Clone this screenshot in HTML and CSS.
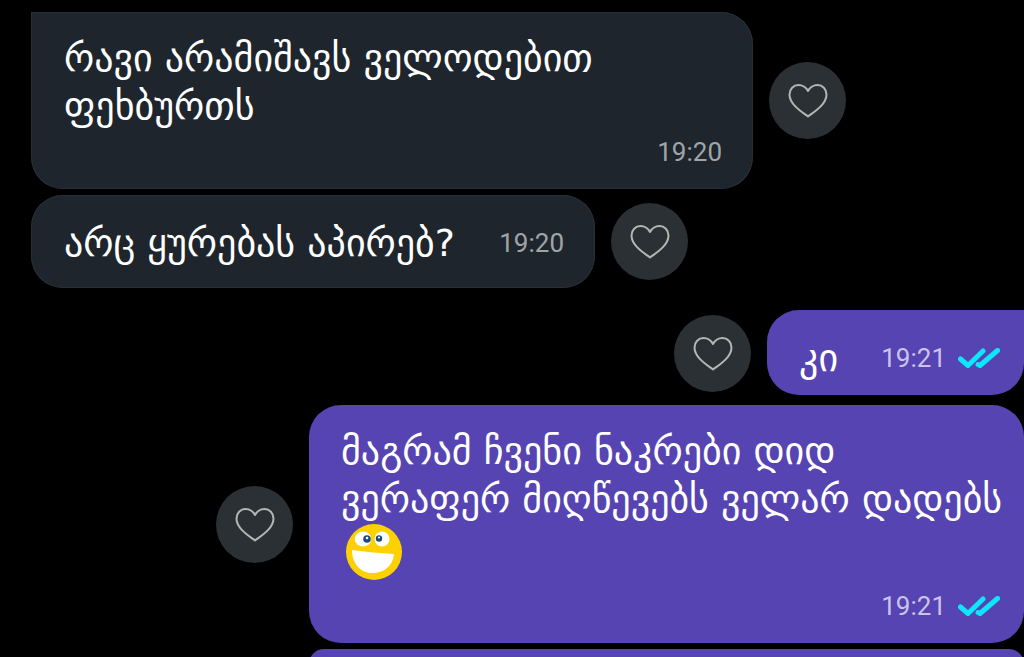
FILE: index.html
```html
<!DOCTYPE html>
<html lang="ka">
<head>
    <meta charset="UTF-8">
    <meta name="viewport" content="width=device-width, initial-scale=1.0">
    <title>Chat</title>
    <link rel="stylesheet" href="styles.css">
</head>
<body>

    <svg class="hidden">
        <symbol id="heart" viewBox="0 0 40 36">
            <path d="M20 33.5C14 29 1.5 21.5 1.5 11.5C1.5 6 5.5 2 10.500 2C14.500 2 18 4.500 20 8C22 4.500 25.500 2 29.500 2C34.500 2 38.500 6 38.500 11.500C38.500 21.500 26 29 20 33.500Z" fill="none" stroke="#b4b6b4" stroke-width="2" stroke-linejoin="round"/>
        </symbol>
        <symbol id="ticks" viewBox="0 0 42 20">
            <path d="M2.500 11L10 17.500L25 3M20 16.500L22 17.500L39.500 2.500" fill="none" stroke="#0fe6fb" stroke-width="5" stroke-linecap="round" stroke-linejoin="round"/>
        </symbol>
    </svg>

    <div class="row row-first">
        <div class="bubble received corner-top-left">
            <p class="text">რავი არამიშავს ველოდებით<br>ფეხბურთს</p>
            <div class="meta"><span class="time">19:20</span></div>
        </div>
        <div class="like"><svg class="heart"><use href="#heart"/></svg></div>
    </div>

    <div class="row row-second">
        <div class="bubble received inline">
            <p class="text">არც ყურებას აპირებ?</p>
            <div class="meta"><span class="time">19:20</span></div>
        </div>
        <div class="like"><svg class="heart"><use href="#heart"/></svg></div>
    </div>

    <div class="row sent-row row-third">
        <div class="like"><svg class="heart"><use href="#heart"/></svg></div>
        <div class="bubble sent inline corner-top-right">
            <p class="text">კი</p>
            <div class="meta"><span class="time">19:21</span><svg class="ticks"><use href="#ticks"/></svg></div>
        </div>
    </div>

    <div class="row sent-row row-fourth">
        <div class="like"><svg class="heart"><use href="#heart"/></svg></div>
        <div class="bubble sent wide">
            <p class="text">მაგრამ ჩვენი ნაკრები დიდ<br>ვერაფერ მიღწევებს ველარ დადებს</p>
            <!-- laughing face -->
            <svg class="smiley" viewBox="0 0 58 58">
                <circle cx="29" cy="28" r="28" fill="#fdd000"/>
                <ellipse cx="18" cy="15" rx="8.300" ry="7.500" fill="#fff"/>
                <ellipse cx="37" cy="15" rx="7.500" ry="7.500" fill="#fff"/>
                <circle cx="22" cy="15" r="3.800" fill="#1d4a7c"/>
                <circle cx="34" cy="14.500" r="3.200" fill="#1d4a7c"/>
                <circle cx="22" cy="14" r="1.300" fill="#fff"/>
                <circle cx="34" cy="13.500" r="1.100" fill="#fff"/>
                <path d="M7 26C20 28 36 29 49 30C48 42 39 49 27 49C15 49 7 39 7 26Z" fill="#fff"/>
            </svg>
            <div class="meta"><span class="time">19:21</span><svg class="ticks"><use href="#ticks"/></svg></div>
        </div>
    </div>

    <div class="row sent-row row-fifth">
        <div class="bubble sent wide next"></div>
    </div>

</body>
</html>
```

FILE: styles.css
```css
html, body {
    margin: 0;
    height: 657px;
    overflow: hidden;
    background-color: #000;
}
.hidden {
    display: none;
}
.row {
    display: flex;
    align-items: center;
    gap: 16px;
    padding-left: 31px;
}
.row-first {
    padding-top: 12px;
}
.row-second {
    margin-top: 6px;
}
.row-third {
    margin-top: 22px;
}
.row-fourth {
    margin-top: 10px;
}
.row-fifth {
    margin-top: 6px;
}
.sent-row {
    justify-content: flex-end;
    padding-left: 0;
}
.bubble {
    box-sizing: border-box;
    border-radius: 32px;
    color: #fff;
}
.received {
    background-color: #1e252c;
    box-shadow: inset 0 0 0 1px #282f36;
    width: 722px;
    height: 177px;
    padding: 22px 31px 0 33px;
}
.sent {
    background-color: #5544b1;
}
.corner-top-left {
    border-top-left-radius: 0;
}
.corner-top-right {
    border-top-right-radius: 0;
}
.inline {
    display: flex;
    align-items: center;
    justify-content: space-between;
}
.received.inline {
    width: 564px;
    height: 93px;
    padding: 2px 31px 0 33px;
}
.sent.inline {
    width: 257px;
    height: 85px;
    padding: 10px 24px 0 32px;
}
.wide {
    width: 715px;
    height: 238px;
    padding: 22px 24px 0 32px;
}
.next {
    height: 30px;
    padding: 0;
}
.text {
    margin: 0;
    font-family: "DejaVu Sans", sans-serif;
    font-size: 38px;
    line-height: 48px;
    white-space: nowrap;
}
.meta {
    display: flex;
    align-items: center;
    justify-content: flex-end;
    gap: 12px;
    font-family: Roboto, sans-serif;
    font-size: 26px;
    line-height: 32px;
}
.received .meta {
    margin-top: 6px;
}
.inline .meta {
    margin-top: 0;
}
.wide .meta {
    margin-top: 8px;
}
.received .time {
    color: #a0a5a8;
}
.sent .time {
    color: #cbc3ec;
}
.ticks {
    width: 42px;
    height: 20px;
}
.smiley {
    display: block;
    width: 58px;
    height: 58px;
    margin: 1px 0 0 4px;
}
.like {
    flex: none;
    width: 77px;
    height: 77px;
    border-radius: 50%;
    background-color: #2a3033;
    display: flex;
    align-items: center;
    justify-content: center;
}
.row-third .like {
    margin-top: 2px;
}
.heart {
    width: 40px;
    height: 36px;
    margin-top: 1px;
}
```
